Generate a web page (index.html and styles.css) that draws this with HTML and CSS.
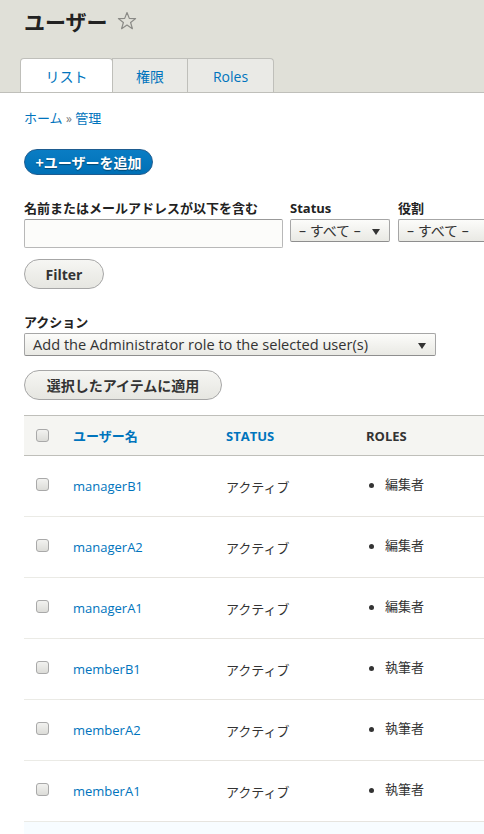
FILE: index.html
```html
<!DOCTYPE html>
<html lang="ja">
<head>
<meta charset="utf-8">
<title>ユーザー</title>
<link rel="stylesheet" href="styles.css">
</head>
<body>
<header class="page-header">
  <h1 class="title">ユーザー
    <svg class="star" width="20" height="20" viewBox="0 0 20 20"><polygon points="10,1.5 12.3,7.4 18.6,7.6 13.6,11.5 15.4,17.7 10,14.1 4.6,17.7 6.4,11.5 1.4,7.6 7.7,7.4" fill="none" stroke="#8a8a86" stroke-width="1.2" stroke-linejoin="round"/></svg>
  </h1>
  <ul class="tabs">
    <li class="tab tab-active w1"><a href="#">リスト</a></li>
    <li class="tab w2"><a href="#">権限</a></li>
    <li class="tab tab-last w3"><a href="#">Roles</a></li>
  </ul>
</header>
<main class="content">
  <nav class="breadcrumb"><a href="#">ホーム</a> <span class="raquo">»</span> <a href="#">管理</a></nav>
  <a class="btn-primary" href="#">+ユーザーを追加</a>

  <div class="filters">
    <div class="field field-name">
      <label>名前またはメールアドレスが以下を含む</label>
      <input type="text" class="text-input">
    </div>
    <div class="field">
      <label>Status</label>
      <div class="select w-status"><span>– すべて –</span></div>
    </div>
    <div class="field">
      <label>役割</label>
      <div class="select w-role"><span>– すべて –</span></div>
    </div>
  </div>
  <button class="btn btn-filter">Filter</button>

  <div class="action">
    <label>アクション</label>
    <div class="select w-action"><span class="latin">Add the Administrator role to the selected user(s)</span></div>
  </div>
  <button class="btn btn-apply">選択したアイテムに適用</button>

  <table class="users">
    <colgroup><col class="c1"><col class="c2"><col class="c3"><col class="c4"></colgroup>
    <thead>
      <tr><th><span class="cb"></span></th><th class="sort">ユーザー名</th><th class="sort">STATUS</th><th>ROLES</th></tr>
    </thead>
    <tbody>
      <tr><td><span class="cb"></span></td><td><a href="#">managerB1</a></td><td>アクティブ</td><td><ul class="roles"><li>編集者</li></ul></td></tr>
      <tr><td><span class="cb"></span></td><td><a href="#">managerA2</a></td><td>アクティブ</td><td><ul class="roles"><li>編集者</li></ul></td></tr>
      <tr><td><span class="cb"></span></td><td><a href="#">managerA1</a></td><td>アクティブ</td><td><ul class="roles"><li>編集者</li></ul></td></tr>
      <tr><td><span class="cb"></span></td><td><a href="#">memberB1</a></td><td>アクティブ</td><td><ul class="roles"><li>執筆者</li></ul></td></tr>
      <tr><td><span class="cb"></span></td><td><a href="#">memberA2</a></td><td>アクティブ</td><td><ul class="roles"><li>執筆者</li></ul></td></tr>
      <tr><td><span class="cb"></span></td><td><a href="#">memberA1</a></td><td>アクティブ</td><td><ul class="roles"><li>執筆者</li></ul></td></tr>
      <tr class="next"><td></td><td></td><td></td><td></td></tr>
    </tbody>
  </table>
</main>
</body>
</html>
```

FILE: styles.css
```css
html, body {
  margin: 0;
  padding: 0;
  overflow: hidden;
  background: #fff;
}
body {
  font-family: "Open Sans", "Noto Sans CJK JP", sans-serif;
  font-size: 13px;
  color: #333;
  width: 484px;
}
a { color: #0074bd; text-decoration: none; }

.page-header {
  background: #e0e0d8;
  border-bottom: 1px solid #bfbfba;
  padding: 7px 0 0 20px;
  height: 85px;
  box-sizing: content-box;
  display: flex;
  flex-direction: column;
}
.title {
  margin: 0 0 0 4px;
  font-size: 21px;
  line-height: 28px;
  font-weight: bold;
  color: #222;
  display: flex;
  align-items: center;
  gap: 9px;
  font-family: "Noto Sans CJK JP", sans-serif;
}
.tabs {
  list-style: none;
  margin: 23px 0 0 0;
  padding: 0;
  display: flex;
  height: 34px;
}
.tab {
  height: 34px;
  box-sizing: border-box;
  border: 1px solid #bfbfba;
  border-bottom: none;
  background: #eaeae6;
  display: flex;
  align-items: center;
  justify-content: center;
  font-size: 14px;
  margin-left: -1px;
}
.tab a { color: #0074bd; padding-top: 1px; }
.tab-active {
  background: #fff;
  margin-left: 0;
  border-radius: 4px 4px 0 0;
}
.tab-last { border-radius: 0 4px 0 0; }
.w1 { width: 93px; }
.w2 { width: 76px; }
.w3 { width: 87px; }

.content {
  padding: 16px 0 0 24px;
  overflow: hidden;
}
.breadcrumb {
  font-size: 13px;
  line-height: 18px;
  height: 18px;
}
.raquo { color: #777; font-size: 12px; }

.btn-primary {
  display: inline-block;
  margin-top: 22px;
  height: 26px;
  width: 129px;
  box-sizing: border-box;
  border: 1px solid #1e5c90;
  border-radius: 14px;
  background: linear-gradient(#0a7dc4, #0070b6);
  color: #fff;
  font-weight: bold;
  font-size: 14px;
  line-height: 24px;
  text-align: center;
  text-shadow: 0 1px 1px rgba(0,0,0,0.4);
  font-family: "Noto Sans CJK JP", sans-serif;
}

.filters {
  display: flex;
  gap: 7px;
  margin-top: 24px;
  align-items: flex-start;
}
.field { display: flex; flex-direction: column; }
.field + .field + .field { margin-left: 1px; }
label {
  font-weight: bold;
  font-size: 13px;
  line-height: 18px;
  height: 18px;
  margin-bottom: 2px;
  color: #222;
  white-space: nowrap;
}
.text-input {
  width: 259px;
  height: 29px;
  box-sizing: border-box;
  border: 1px solid #b8b8b8;
  border-top-color: #999;
  border-radius: 2px;
  background: #fcfcfa;
  margin: 0;
}
.select {
  position: relative;
  height: 23px;
  box-sizing: border-box;
  border: 1px solid #a6a6a6;
  border-bottom-color: #8e8e8e;
  border-radius: 2px;
  background: linear-gradient(#fcfcfa, #e9e9e4);
  font-size: 14px;
  line-height: 21px;
  padding-left: 8px;
  color: #333;
  white-space: nowrap;
  overflow: hidden;
}
.select::after {
  content: "";
  position: absolute;
  right: 9px;
  top: 9px;
  border-left: 4px solid transparent;
  border-right: 4px solid transparent;
  border-top: 6px solid #333;
}
.w-status { width: 100px; }
.w-role { width: 86px; border-right: none; border-radius: 2px 0 0 2px; }
.w-role::after { display: none; }
.w-action { width: 412px; }
.latin { font-size: 14.6px; }

.btn {
  display: block;
  height: 30px;
  box-sizing: border-box;
  border: 1px solid #a6a6a6;
  border-radius: 16px;
  background: linear-gradient(#f6f6f3, #e6e6e1);
  color: #333;
  font-weight: bold;
  font-size: 14px;
  padding: 0;
  font-family: "Open Sans", "Noto Sans CJK JP", sans-serif;
}
.btn-filter { width: 80px; margin-top: 11px; }
.btn-apply { width: 198px; margin-top: 14px; font-family: "Noto Sans CJK JP", sans-serif; }

.action { display: flex; flex-direction: column; margin-top: 24px; }

.users {
  margin-top: 15px;
  border-collapse: collapse;
  table-layout: fixed;
  width: 460px;
}
.c1 { width: 36px; }
.c2 { width: 153px; }
.c3 { width: 140px; }
.c4 { width: 131px; }
.users thead tr {
  background: #f5f5f2;
  border-top: 1px solid #bfbfba;
  border-bottom: 1px solid #bfbfba;
}
.users th {
  height: 39px;
  text-align: left;
  font-weight: bold;
  font-size: 13px;
  padding: 0 0 0 13px;
  color: #333;
  text-transform: uppercase;
}
.users th.sort { color: #0074bd; }
.users th:first-child, .users td:first-child { padding: 0 0 0 12px; }
.users td {
  height: 60px;
  padding: 0 0 0 13px;
  border-bottom: 1px solid #e6e4df;
  font-size: 13px;
  vertical-align: middle;
}
.users td:first-child { border-bottom-color: #ebebe6; }
.users tbody tr.next { background: #f7fcff; }
.users tbody tr.next td { border: none; height: 20px; }
.users tbody td:nth-child(3) { font-family: "Noto Sans CJK JP", sans-serif; }
.cb {
  display: block;
  width: 13px;
  height: 13px;
  box-sizing: border-box;
  border: 1px solid #a9a9a9;
  border-radius: 3px;
  background: linear-gradient(#f2f2f0, #dcdcd8);
  margin-top: -3px;
}
.users th .cb { margin-top: -1px; }
.roles {
  list-style: none;
  margin: 0;
  padding: 0 0 0 3px;
}
.roles li {
  display: flex;
  align-items: center;
  font-family: "Noto Sans CJK JP", sans-serif;
  line-height: 18px;
  margin-top: -4px;
}
.roles li::before {
  content: "";
  width: 5px;
  height: 5px;
  border-radius: 50%;
  background: #333;
  margin-right: 11px;
  position: relative;
  top: 1px;
}
```
